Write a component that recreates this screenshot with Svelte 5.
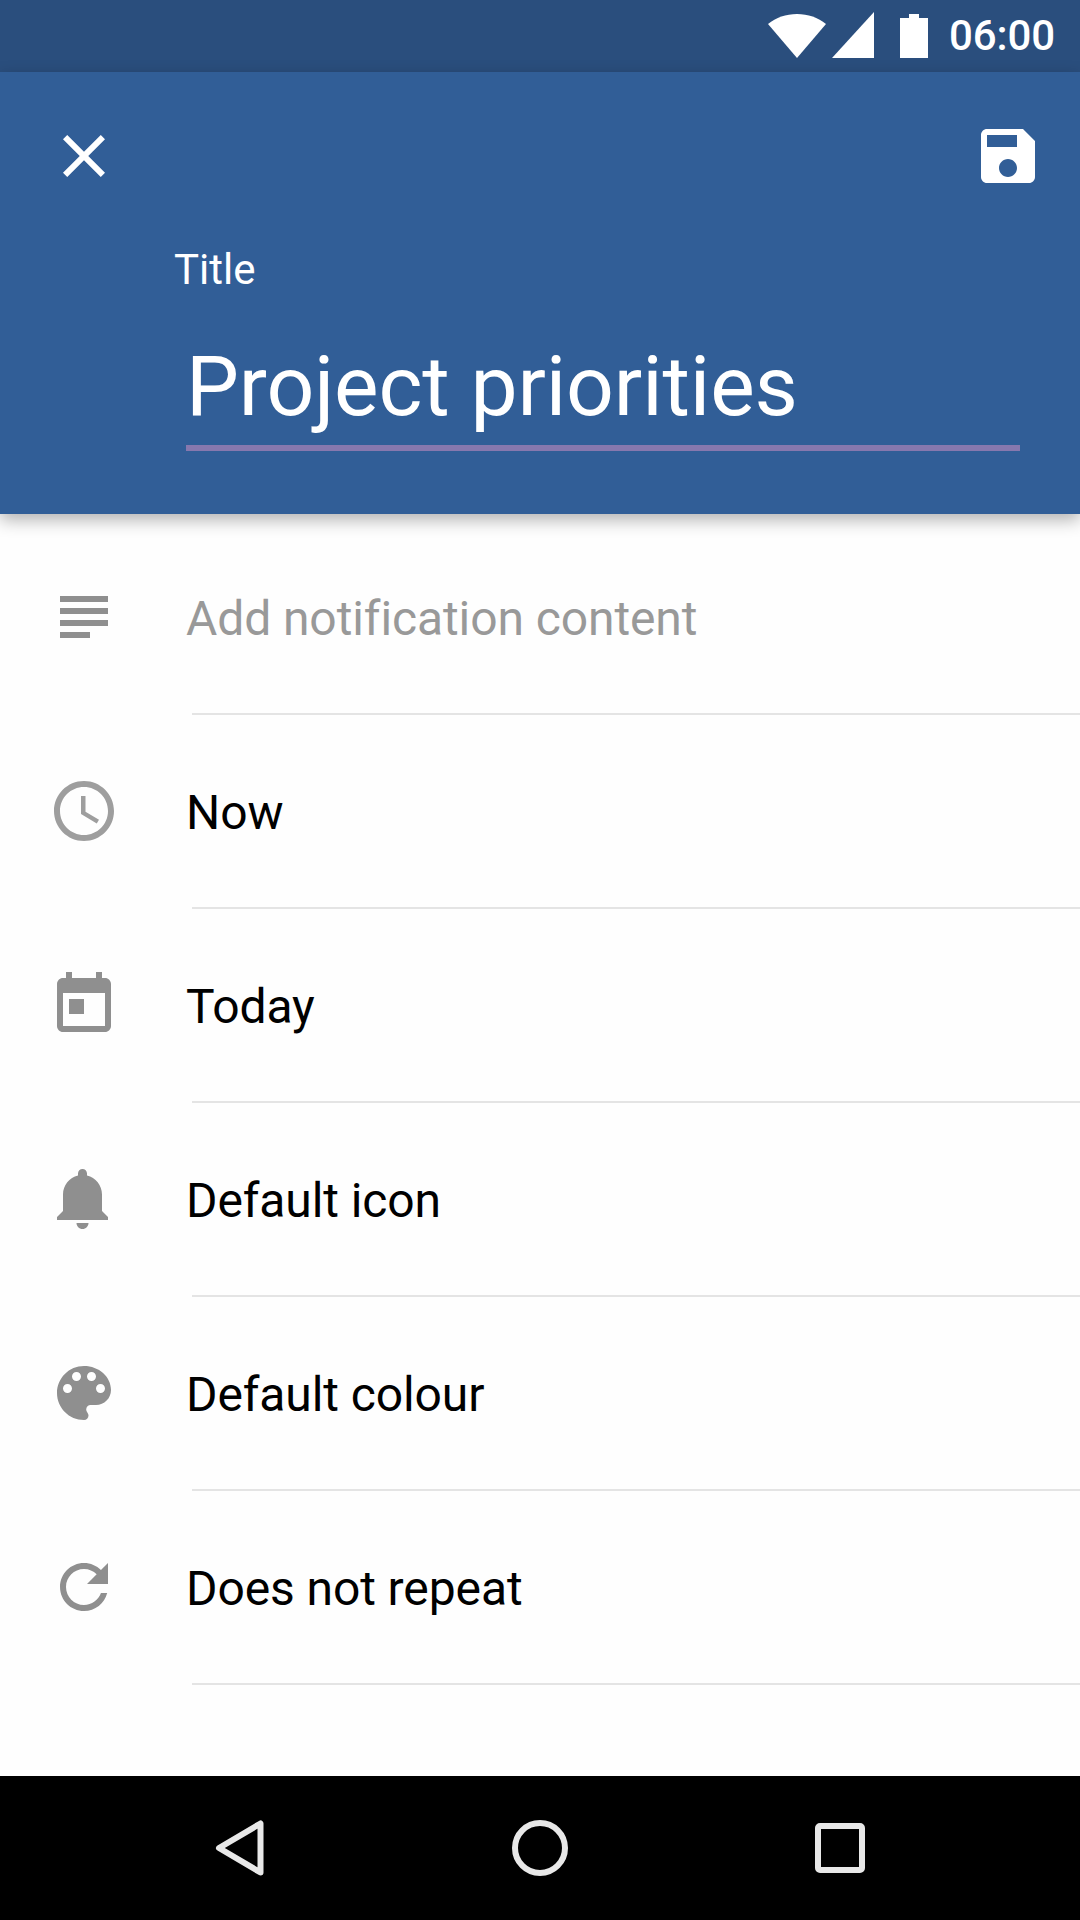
<script>
  const rows = [
    { label: 'Add notification content', placeholder: true, paths: ['M14 17H4v2h10v-2zm6-8H4v2h16V9zM4 15h16v-2H4v2zM4 5v2h16V5H4z'] },
    { label: 'Now', light: true, paths: ['M11.99 2C6.47 2 2 6.48 2 12s4.47 10 9.99 10C17.52 22 22 17.52 22 12S17.52 2 11.99 2zM12 20c-4.42 0-8-3.58-8-8s3.58-8 8-8 8 3.58 8 8-3.58 8-8 8z', 'M12.5 7H11v6l5.25 3.15.75-1.23-4.5-2.67z'] },
    { label: 'Today', paths: ['M19 3h-1V1h-2v2H8V1H6v2H5c-1.11 0-1.99.9-1.99 2L3 19c0 1.1.89 2 2 2h14c1.1 0 2-.9 2-2V5c0-1.1-.9-2-2-2zm0 16H5V8h14v11zM7 10h5v5H7z'] },
    { label: 'Default icon', paths: ['M11.5 22c1.1 0 2-.9 2-2h-4c0 1.1.9 2 2 2zm6.5-6v-5.5c0-3.07-2.13-5.64-5-6.32V3.5c0-.83-.67-1.5-1.5-1.5S10 2.67 10 3.5v.68c-2.87.68-5 3.25-5 6.32V16l-2 2v1h17v-1l-2-2z'] },
    { label: 'Default colour', paths: ['M12 3c-4.97 0-9 4.03-9 9s4.03 9 9 9c.83 0 1.5-.67 1.5-1.5 0-.39-.15-.74-.39-1.01-.23-.26-.38-.61-.38-.99 0-.83.67-1.5 1.5-1.5H16c2.76 0 5-2.24 5-5 0-4.42-4.03-8-9-8zm-5.5 9c-.83 0-1.5-.67-1.5-1.5S5.67 9 6.5 9 8 9.67 8 10.5 7.33 12 6.5 12zm3-4C8.67 8 8 7.33 8 6.5S8.67 5 9.5 5s1.5.67 1.5 1.5S10.33 8 9.5 8zm5 0c-.83 0-1.5-.67-1.5-1.5S13.67 5 14.5 5s1.5.67 1.5 1.5S15.33 8 14.5 8zm3 4c-.83 0-1.5-.67-1.5-1.5S16.67 9 17.5 9s1.5.67 1.5 1.5-.67 1.5-1.5 1.5z'] },
    { label: 'Does not repeat', paths: ['M17.65 6.35C16.2 4.9 14.21 4 12 4c-4.42 0-7.99 3.58-7.99 8s3.57 8 7.99 8c3.73 0 6.84-2.55 7.73-6h-2.08c-.82 2.33-3.04 4-5.65 4-3.31 0-6-2.69-6-6s2.69-6 6-6c1.66 0 3.14.69 4.22 1.78L13 11h7V4l-2.35 2.35z'] }
  ];
</script>

<div class="screen">
  <div class="status">
    <svg class="wifi" viewBox="0 0 58 44"><path d="M29 44 0 10C8 3.500 18 0 29 0s21 3.500 29 10z" /></svg>
    <svg class="signal" viewBox="0 0 42 46"><path d="M0 46 42 0v46z" /></svg>
    <svg class="battery" viewBox="0 0 28 44"><path d="M9 0h10v4h9v40H0V4h9z" /></svg>
    <span class="time">06:00</span>
  </div>

  <header class="head">
    <div class="toolbar">
      <svg class="icon" viewBox="0 0 24 24"><path d="M19 6.41L17.590 5 12 10.590 6.410 5 5 6.410 10.590 12 5 17.590 6.410 19 12 13.410 17.590 19 19 17.590 13.410 12z" /></svg>
      <svg class="icon" viewBox="0 0 24 24"><path d="M17 3H5c-1.110 0-2 .9-2 2v14c0 1.100.89 2 2 2h14c1.100 0 2-.9 2-2V7l-4-4zm-5 16c-1.660 0-3-1.340-3-3s1.340-3 3-3 3 1.340 3 3-1.340 3-3 3zm3-10H5V5h10v4z" /></svg>
    </div>
    <div class="field">
      <div class="caption">Title</div>
      <div class="value">Project priorities</div>
    </div>
  </header>

  <main class="list">
    {#each rows as row}
      <div class="row">
        <svg class="icon" class:light={row.light} viewBox="0 0 24 24">
          {#each row.paths as d}<path {d} />{/each}
        </svg>
        <span class="label" class:placeholder={row.placeholder}>{row.label}</span>
      </div>
    {/each}
  </main>

  <nav class="nav">
    <svg class="navicon" viewBox="0 0 72 72"><path d="M56.500 11.500v49L15 36z" /></svg>
    <svg class="navicon" viewBox="0 0 72 72"><circle cx="36" cy="36" r="25" /></svg>
    <svg class="navicon" viewBox="0 0 72 72"><rect x="14" y="14" width="44" height="44" rx="2" /></svg>
  </nav>
</div>

<style>
  :global(body) {
    margin: 0;
    background: #fefefe;
  }

  .screen {
    width: 1080px;
    height: 1920px;
    display: flex;
    flex-direction: column;
    overflow: hidden;
    font-family: Roboto, sans-serif;
    background: #fefefe;
  }

  .status {
    height: 72px;
    flex: none;
    display: flex;
    align-items: center;
    padding-right: 25px;
    justify-content: flex-end;
    background: #2a4e7d;
    color: #fff;
  }

  .status svg {
    fill: #fff;
    display: block;
  }

  .wifi {
    width: 58px;
    height: 44px;
    margin-top: -1px;
  }

  .signal {
    width: 42px;
    height: 46px;
    margin-left: 6px;
    margin-top: -2px;
  }

  .battery {
    width: 28px;
    height: 44px;
    margin-left: 26px;
    margin-top: -1px;
  }

  .time {
    margin-left: 21px;
    font-size: 42px;
    font-weight: 500;
    line-height: 72px;
    margin-top: -1px;
    letter-spacing: -0.1px;
  }

  .head {
    position: relative;
    z-index: 1;
    height: 442px;
    flex: none;
    box-sizing: border-box;
    padding-top: 48px;
    background: #315e97;
    color: #fff;
    box-shadow: 0 6px 16px rgba(0, 0, 0, 0.3);
  }

  .toolbar {
    display: flex;
    justify-content: space-between;
    padding: 0 36px 0 48px;
  }

  .icon {
    width: 72px;
    height: 72px;
    flex: none;
    display: block;
  }

  .head .icon {
    fill: #fff;
  }

  .field {
    margin: 0 60px 0 186px;
    height: 253px;
    border-bottom: 6px solid #8778ae;
    box-sizing: content-box;
  }

  .caption {
    margin-left: -12px;
    font-size: 42px;
    line-height: 56px;
    padding-top: 50px;
  }

  .value {
    font-size: 84px;
    line-height: 100px;
    margin-top: 39px;
    white-space: nowrap;
    letter-spacing: -0.13px;
  }

  .list {
    padding-top: 6px;
    flex: 1;
  }

  .row {
    height: 194px;
    display: flex;
    align-items: center;
    padding-left: 48px;
    position: relative;
  }

  .row::after {
    content: '';
    position: absolute;
    left: 192px;
    right: 0;
    bottom: -1px;
    height: 2px;
    background: #e4e4e4;
  }

  .row .icon {
    fill: #8f8f8f;
  }

  .row .icon.light {
    fill: #9e9e9e;
  }

  .label {
    margin-left: 66px;
    font-size: 48px;
    line-height: 64px;
    color: #000;
    padding-top: 4px;
    letter-spacing: -0.1px;
  }

  .placeholder {
    color: #999;
  }

  .nav {
    height: 144px;
    flex: none;
    display: flex;
    justify-content: center;
    align-items: center;
    gap: 228px;
    background: #000;
  }

  .navicon {
    width: 72px;
    height: 72px;
    display: block;
    fill: none;
    stroke: #e8e8e8;
    stroke-width: 6;
    stroke-linejoin: round;
  }
</style>
